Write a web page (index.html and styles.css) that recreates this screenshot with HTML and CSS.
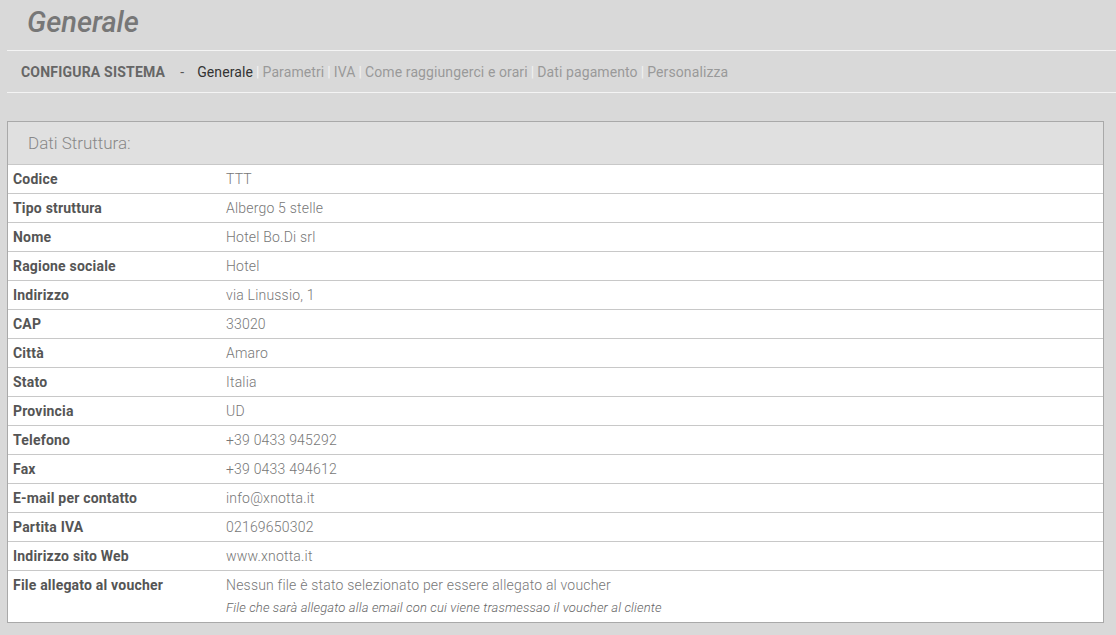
FILE: index.html
```html
<!DOCTYPE html>
<html lang="it">
<head>
<meta charset="utf-8">
<title>Generale</title>
<link rel="stylesheet" href="styles.css">
</head>
<body>
<div class="page">
  <h1 class="title">Generale</h1>
  <nav class="subnav">
    <span class="section">CONFIGURA SISTEMA</span>
    <span class="dash">-</span>
    <a class="link active">Generale</a><span class="sep">|</span><a class="link">Parametri</a><span class="sep">|</span><a class="link">IVA</a><span class="sep">|</span><a class="link">Come raggiungerci e orari</a><span class="sep">|</span><a class="link">Dati pagamento</a><span class="sep">|</span><a class="link">Personalizza</a>
  </nav>
  <section class="panel">
    <div class="panel-head">Dati Struttura:</div>
    <div class="row"><div class="label">Codice</div><div class="value">TTT</div></div>
    <div class="row"><div class="label">Tipo struttura</div><div class="value">Albergo 5 stelle</div></div>
    <div class="row"><div class="label">Nome</div><div class="value">Hotel Bo.Di srl</div></div>
    <div class="row"><div class="label">Ragione sociale</div><div class="value">Hotel</div></div>
    <div class="row"><div class="label">Indirizzo</div><div class="value">via Linussio, 1</div></div>
    <div class="row"><div class="label">CAP</div><div class="value">33020</div></div>
    <div class="row"><div class="label">Città</div><div class="value">Amaro</div></div>
    <div class="row"><div class="label">Stato</div><div class="value">Italia</div></div>
    <div class="row"><div class="label">Provincia</div><div class="value">UD</div></div>
    <div class="row"><div class="label">Telefono</div><div class="value">+39 0433 945292</div></div>
    <div class="row"><div class="label">Fax</div><div class="value">+39 0433 494612</div></div>
    <div class="row"><div class="label">E-mail per contatto</div><div class="value">info@xnotta.it</div></div>
    <div class="row"><div class="label">Partita IVA</div><div class="value">02169650302</div></div>
    <div class="row"><div class="label">Indirizzo sito Web</div><div class="value">www.xnotta.it</div></div>
    <div class="row last"><div class="label">File allegato al voucher</div><div class="value">Nessun file è stato selezionato per essere allegato al voucher<div class="note">File che sarà allegato alla email con cui viene trasmessao il voucher al cliente</div></div></div>
  </section>
</div>
</body>
</html>
```

FILE: styles.css
```css
html, body {
  margin: 0;
  padding: 0;
  background: #d9d9d9;
  font-family: Roboto, "Liberation Sans", Arial, sans-serif;
}
.page {
  padding: 0 12px 0 7px;
}
.title {
  margin: 0 -12px 0 0;
  padding: 5px 0 0 20px;
  height: 45px;
  font-size: 29px;
  font-style: italic;
  font-weight: 500;
  color: #777;
  line-height: 34px;
  border-bottom: 1px solid #f4f4f4;
}
.subnav {
  height: 41px;
  display: flex;
  align-items: center;
  padding-left: 14px;
  font-size: 14px;
  letter-spacing: 0.1px;
  border-bottom: 1px solid #f4f4f4;
  margin-right: -12px;
}
.section {
  font-weight: 700;
  color: #666;
  letter-spacing: 0.2px;
}
.dash {
  color: #555;
  margin: 0 13px 0 15px;
}
.link {
  color: #999;
  font-weight: 400;
}
.link.active {
  color: #333;
}
.sep {
  color: #f2f2f2;
  margin: 0 3px;
}
.panel {
  margin-top: 28px;
  background: #fff;
  border: 1px solid #a9a9a9;
}
.panel-head {
  height: 42px;
  background: #e0e0e0;
  border-bottom: 1px solid #c8c8c8;
  color: #888;
  font-size: 17px;
  font-weight: 300;
  line-height: 42px;
  padding-left: 20px;
}
.row {
  display: grid;
  grid-template-columns: 218px 1fr;
  height: 28px;
  border-bottom: 1px solid #c8c8c8;
  font-size: 14px;
  letter-spacing: 0.2px;
  line-height: 28px;
}
.row.last {
  height: 51px;
  border-bottom: none;
}
.label {
  padding-left: 5px;
  font-weight: 700;
  color: #555;
}
.value {
  color: #777;
  font-weight: 300;
}
.note {
  font-size: 13px;
  font-style: italic;
  line-height: 17px;
  color: #666;
  letter-spacing: 0.15px;
}
```
